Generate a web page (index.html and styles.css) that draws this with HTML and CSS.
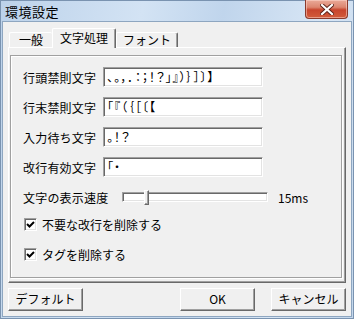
FILE: index.html
```
<!DOCTYPE html>
<html lang="ja">
<head>
  <meta charset="UTF-8">
  <title>環境設定</title>
  <link rel="stylesheet" href="styles.css">
</head>
<body>

<div class="window">
  <div class="titlebar">
    <span class="title">環境設定</span>
    <div class="close">
      <svg width="14" height="11" viewBox="0 0 14 11">
        <path d="M2 1 L12 10 M12 1 L2 10" stroke="#5a2118" stroke-width="4" stroke-linecap="square"/>
        <path d="M2 1 L12 10 M12 1 L2 10" stroke="#ffffff" stroke-width="2.2" stroke-linecap="square"/>
      </svg>
    </div>
  </div>

  <div class="client">
    <div class="tabs">
      <div class="tab first">一般</div>
      <div class="tab active">文字処理</div>
      <div class="tab">フォント</div>
    </div>

    <div class="panel">
      <div class="frame">
        <div class="row">
          <span class="label">行頭禁則文字</span>
          <div class="field">、。，．：；！？」』）｝］〕】</div>
        </div>
        <div class="row">
          <span class="label">行末禁則文字</span>
          <div class="field">「『（｛［〔【</div>
        </div>
        <div class="row">
          <span class="label">入力待ち文字</span>
          <div class="field">。！？</div>
        </div>
        <div class="row">
          <span class="label">改行有効文字</span>
          <div class="field">「・</div>
        </div>
        <div class="row slider-row">
          <span class="label wide">文字の表示速度</span>
          <div class="track"><div class="thumb"></div></div>
          <span class="value">15ms</span>
        </div>
        <div class="check">
          <span class="box">
            <svg width="9" height="9" viewBox="0 0 9 9"><path d="M1 4 L3.5 6.5 L8 2" stroke="#000" stroke-width="2" fill="none"/></svg>
          </span>
          不要な改行を削除する
        </div>
        <div class="check second">
          <span class="box">
            <svg width="9" height="9" viewBox="0 0 9 9"><path d="M1 4 L3.5 6.5 L8 2" stroke="#000" stroke-width="2" fill="none"/></svg>
          </span>
          タグを削除する
        </div>
      </div>
    </div>

    <div class="buttons">
      <div class="btn">デフォルト</div>
      <div class="spacer"></div>
      <div class="btn">OK</div>
      <div class="btn">キャンセル</div>
    </div>
  </div>
</div>

</body>
</html>
```

FILE: styles.css
```
* {
  box-sizing: border-box;
}
body {
  margin: 0;
  font-family: "Noto Sans CJK JP", "Noto Sans", sans-serif;
  font-size: 12px;
  color: #000;
  background: #c4d7ec;
}
.window {
  width: 354px;
  height: 319px;
  border: 1px solid #7a93b0;
  background: linear-gradient(100deg, #bcd2ea 0%, #d3e3f4 35%, #c0d5ec 55%, #d8e6f5 80%, #c3d7ec 100%);
  display: flex;
  flex-direction: column;
}
.titlebar {
  height: 20px;
  display: flex;
  align-items: flex-start;
  justify-content: space-between;
  flex-shrink: 0;
}
.title {
  font-size: 13px;
  line-height: 18px;
  padding: 2px 0 0 4px;
  letter-spacing: 0.5px;
}
.close {
  width: 43px;
  height: 19px;
  margin: -1px 5px 0 0;
  border: 1px solid #8a3a2c;
  border-top: none;
  border-radius: 0 0 4px 4px;
  background: linear-gradient(#eaaa99 0%, #dc8670 40%, #c8452d 55%, #d25c3b 100%);
  box-shadow: inset 0 0 0 1px rgba(255, 220, 210, 0.5);
  display: flex;
  align-items: center;
  justify-content: center;
}
.client {
  flex: 1;
  margin: 0 1px 1px 1px;
  border: 1px solid #8ea6c0;
  background: #f0f0f0;
  padding: 6px 5px 5px 5px;
  display: flex;
  flex-direction: column;
}
.tabs {
  display: flex;
  align-items: flex-end;
  height: 19px;
  padding-left: 1px;
}
.tab {
  height: 15px;
  line-height: 14px;
  padding: 0 6px;
  border-top: 1px solid #fff;
  border-left: 1px solid #fff;
  border-right: 1px solid #696969;
  box-shadow: inset -1px 0 0 #a0a0a0;
  border-radius: 2px 2px 0 0;
  position: relative;
}
.tab.first {
  width: 43px;
  border-right: none;
  box-shadow: none;
  text-align: center;
}
.tab.active {
  height: 20px;
  margin-bottom: -1px;
  padding: 0 7px;
  line-height: 18px;
  background: #f0f0f0;
  z-index: 1;
}
.panel {
  height: 236px;
  border-top: 1px solid #fff;
  border-left: 1px solid #fff;
  border-right: 1px solid #696969;
  border-bottom: 1px solid #696969;
  box-shadow: inset -1px -1px 0 #a0a0a0;
  padding: 7px 3px 4px 1px;
}
.frame {
  height: 100%;
  border: 1px solid #a0a0a0;
  box-shadow: 1px 1px 0 #fff, inset 1px 1px 0 #fff;
  padding: 11px 0 0 12px;
}
.row {
  display: flex;
  align-items: center;
  height: 20px;
  margin-bottom: 10px;
}
.label {
  width: 80px;
  letter-spacing: 0.2px;
}
.label.wide {
  width: 99px;
}
.field {
  width: 160px;
  height: 20px;
  background: #fff;
  border-top: 1px solid #a0a0a0;
  border-left: 1px solid #a0a0a0;
  border-right: 1px solid #fff;
  border-bottom: 1px solid #fff;
  box-shadow: inset 1px 1px 0 #696969, inset -1px -1px 0 #e3e3e3;
  padding: 0 3px;
  line-height: 18px;
  white-space: nowrap;
  overflow: hidden;
  font-feature-settings: "palt";
  letter-spacing: 1px;
}
.slider-row {
  margin-top: 0;
}
.track {
  width: 146px;
  height: 10px;
  background: #fff;
  border-top: 1px solid #a0a0a0;
  border-left: 1px solid #a0a0a0;
  border-right: 1px solid #fff;
  border-bottom: 1px solid #fff;
  box-shadow: inset 1px 1px 0 #696969, inset -1px -1px 0 #e3e3e3;
  position: relative;
  margin-right: 10px;
}
.thumb {
  position: absolute;
  left: 21px;
  top: -3px;
  width: 5px;
  height: 15px;
  background: #f0f0f0;
  border-top: 1px solid #fff;
  border-left: 1px solid #fff;
  border-right: 1px solid #696969;
  border-bottom: 1px solid #696969;
  box-shadow: inset -1px -1px 0 #a0a0a0;
}
.value {
  font-size: 12px;
}
.check {
  display: flex;
  align-items: center;
  height: 14px;
  margin-top: 8px;
  padding-left: 1px;
}
.check.second {
  margin-top: 16px;
}
.box {
  width: 13px;
  height: 13px;
  margin-right: 5px;
  background: #fff;
  border-top: 1px solid #a0a0a0;
  border-left: 1px solid #a0a0a0;
  border-right: 1px solid #fff;
  border-bottom: 1px solid #fff;
  box-shadow: inset 1px 1px 0 #696969, inset -1px -1px 0 #e3e3e3;
  display: flex;
  align-items: center;
  justify-content: center;
}
.buttons {
  display: flex;
  margin-top: 5px;
}
.spacer {
  flex: 1;
}
.btn {
  width: 75px;
  height: 23px;
  line-height: 20px;
  text-align: center;
  background: #f0f0f0;
  border-top: 1px solid #fff;
  border-left: 1px solid #fff;
  border-right: 1px solid #696969;
  border-bottom: 1px solid #696969;
  box-shadow: inset -1px -1px 0 #a0a0a0;
  margin-left: 16px;
}
.btn:first-child {
  margin-left: 0;
}
.spacer + .btn {
  margin-left: 0;
}
```
